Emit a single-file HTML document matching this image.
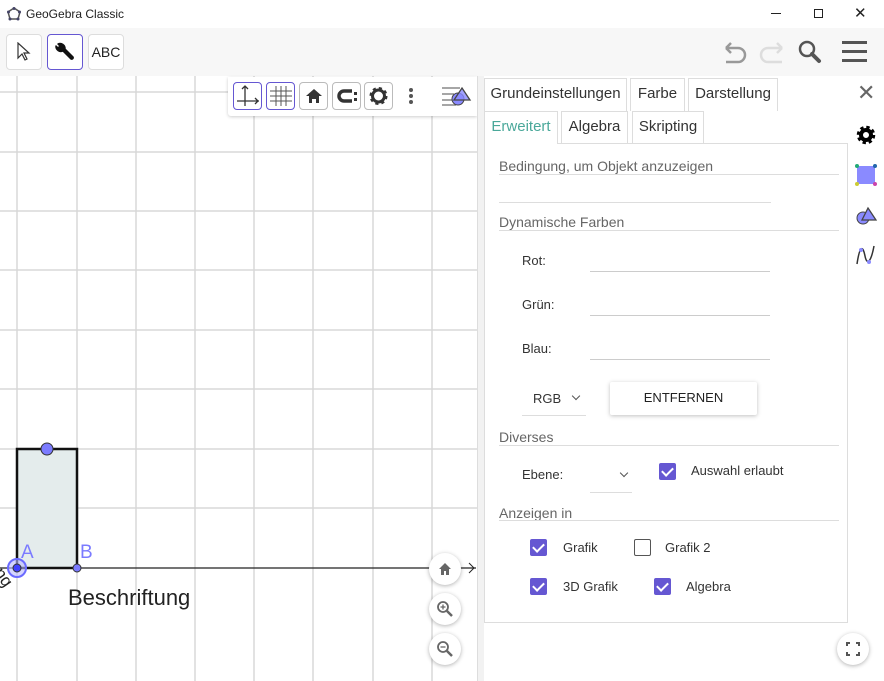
<!DOCTYPE html>
<html><head><meta charset="utf-8"><style>
*{box-sizing:border-box;margin:0;padding:0}
body{width:884px;height:681px;overflow:hidden;font-family:"Liberation Sans",sans-serif;background:#fff;position:relative;color:#333}
.a{position:absolute}
.tab{position:absolute;border:1px solid #ddd;border-bottom:none;background:#fff;font-size:15px;color:#333;padding:6px 0 0 0;text-align:center;height:33px}
.lbl{position:absolute;font-size:14px;color:#666}
.hr{position:absolute;height:1px;background:#ddd}
.t{position:absolute;font-size:13px;color:#333}
.cb{position:absolute;width:17px;height:17px;background:#6557d2;border-radius:2px}
.cb:after{content:"";position:absolute;left:5px;top:2px;width:5px;height:9px;border:solid #fff;border-width:0 2px 2px 0;transform:rotate(45deg)}
.circ{position:absolute;width:32px;height:32px;border-radius:50%;background:#fff;box-shadow:0 1px 4px rgba(0,0,0,.3)}
.tb{position:absolute;top:82px;width:29px;height:28px;border:1px solid #bbb;border-radius:4px;background:#fff}
</style></head><body>
<div class="a" style="left:0;top:0;width:884px;height:28px;background:#fff"></div>
<svg class="a" style="left:7px;top:7px" width="14" height="14"><polygon points="7,1 13,5 11,12 3,12 1,5" fill="none" stroke="#555" stroke-width="1.5"/><circle cx="7" cy="1.5" r="1.5" fill="#446"/><circle cx="12.5" cy="5" r="1.5" fill="#446"/><circle cx="1.5" cy="5" r="1.5" fill="#446"/><circle cx="11" cy="12" r="1.5" fill="#446"/><circle cx="3" cy="12" r="1.5" fill="#446"/></svg>
<div class="a" style="left:26px;top:7px;font-size:12px;color:#222">GeoGebra Classic</div>
<div class="a" style="left:771px;top:13px;width:10px;height:1px;background:#222"></div>
<div class="a" style="left:814px;top:9px;width:9px;height:9px;border:1px solid #222"></div>
<div class="a" style="left:854px;top:4px;font-size:15px;color:#222">✕</div>
<div class="a" style="left:0;top:28px;width:884px;height:48px;background:#f7f7f7"></div>
<div class="a" style="left:6px;top:34px;width:36px;height:36px;background:#fff;border:1px solid #ddd;border-radius:4px"></div>
<svg class="a" style="left:16px;top:42px" width="16" height="20"><path d="M2 1 L2 16 L6 12 L9 18 L11 17 L8 11 L13 11 Z" fill="#fff" stroke="#333" stroke-width="1.2"/></svg>
<div class="a" style="left:47px;top:34px;width:36px;height:36px;background:#fff;border:1.5px solid #6557d2;border-radius:4px"></div>
<svg class="a" style="left:54px;top:41px" width="22" height="22"><path d="M4 3 L6 5 L4 7 L2 5 A5 5 0 0 0 9 10 L17 18 A1.5 1.5 0 0 0 19 16 L11 8 A5 5 0 0 0 4 3 Z" fill="#111" stroke="#111" stroke-width="1.5" stroke-linejoin="round"/></svg>
<div class="a" style="left:88px;top:34px;width:36px;height:36px;background:#fff;border:1px solid #ddd;border-radius:4px;font-size:14px;text-align:center;line-height:34px;color:#222">ABC</div>
<svg class="a" style="left:720px;top:38px" width="120" height="30"><path d="M6 10 H18 a7 7 0 0 1 0 14 H6 M6 10 l5-5 M6 10 l5 5" stroke="#999" stroke-width="2.5" fill="none"/><path d="M62 10 H48 a7 7 0 0 0 0 14 H62 M62 10 l-5-5 M62 10 l-5 5" stroke="#ddd" stroke-width="2.5" fill="none"/><circle cx="87" cy="11" r="7" stroke="#555" stroke-width="2.5" fill="none"/><path d="M92 16 l7 7" stroke="#555" stroke-width="4" stroke-linecap="round"/></svg>
<div class="a" style="left:842px;top:41px;width:25px;height:3px;background:#555;box-shadow:0 9px 0 #555,0 18px 0 #555"></div>
<svg class="a" style="left:0;top:76px" width="478" height="605">
<g stroke="#d8d8d8" stroke-width="1.5">
<line x1="17" y1="0" x2="17" y2="605"/><line x1="77" y1="0" x2="77" y2="605"/><line x1="136" y1="0" x2="136" y2="605"/><line x1="195" y1="0" x2="195" y2="605"/><line x1="254" y1="0" x2="254" y2="605"/><line x1="313" y1="0" x2="313" y2="605"/><line x1="373" y1="0" x2="373" y2="605"/><line x1="432" y1="0" x2="432" y2="605"/>
<line x1="0" y1="16" x2="478" y2="16"/><line x1="0" y1="76" x2="478" y2="76"/><line x1="0" y1="135" x2="478" y2="135"/><line x1="0" y1="194" x2="478" y2="194"/><line x1="0" y1="254" x2="478" y2="254"/><line x1="0" y1="313" x2="478" y2="313"/><line x1="0" y1="373" x2="478" y2="373"/><line x1="0" y1="432" x2="478" y2="432"/>
</g>
<line x1="0" y1="492" x2="476" y2="492" stroke="#222" stroke-width="1.2"/>
<path d="M469 487 l5 5 l-5 5" stroke="#222" fill="none"/>
<rect x="17" y="373" width="60" height="119" fill="#e4ecec" stroke="#111" stroke-width="2.5"/>
<circle cx="47" cy="373" r="6" fill="#7b7bff" stroke="#333"/>
<circle cx="77" cy="492" r="4" fill="#7b7bff" stroke="#333"/>
<circle cx="17" cy="492" r="9" fill="#b9b9ff" fill-opacity=".6" stroke="#6a6aff" stroke-width="2"/>
<circle cx="17" cy="492" r="4" fill="#4040ff" stroke="#333"/>
<text x="21" y="482" font-size="19" fill="#7b7bff" font-family="Liberation Sans">A</text>
<text x="80" y="482" font-size="19" fill="#7b7bff" font-family="Liberation Sans">B</text>
<text x="-8" y="500" font-size="17" fill="#222" font-family="Liberation Sans" transform="rotate(55 -4 500)">ng</text>
<text x="68" y="529" font-size="22" fill="#222" font-family="Liberation Sans">Beschriftung</text>
</svg>
<div class="a" style="left:228px;top:77px;width:249px;height:39px;background:#fff;box-shadow:0 1px 3px rgba(0,0,0,.2);border-radius:0 0 0 3px"></div>
<div class="tb" style="left:233px;border-color:#6557d2"><svg width="27" height="26"><path d="M11 3 V23 M3 18 H25 M21 15 l3 3 l-3 3 M8 6 l3-3 l3 3" stroke="#333" stroke-width="1.3" fill="none"/></svg></div>
<div class="tb" style="left:266px;border-color:#6557d2"><svg width="27" height="26"><path d="M9 3V23M14 3V23M19 3V23M3 8H25M3 13H25M3 18H25" stroke="#555" stroke-width="1"/></svg></div>
<div class="tb" style="left:299px"><svg width="27" height="26"><path d="M6 13 L14 6 L22 13 H19 V20 H16 V16 H12 V20 H9 V13 Z" fill="#333"/></svg></div>
<div class="tb" style="left:332px"><svg width="27" height="26"><path d="M19 8 H11 a5 5 0 0 0 0 10 H19" stroke="#333" stroke-width="3.5" fill="none"/><rect x="21" y="9" width="3" height="3" fill="#333"/><rect x="21" y="15" width="3" height="3" fill="#333"/></svg></div>
<div class="tb" style="left:364px"><svg width="27" height="26"><circle cx="13.5" cy="13" r="6" fill="none" stroke="#333" stroke-width="3"/><circle cx="13.5" cy="13" r="7.5" fill="none" stroke="#333" stroke-width="3" stroke-dasharray="3 2.9"/></svg></div>
<div class="a" style="left:409px;top:88px;width:4px;height:4px;border-radius:2px;background:#555;box-shadow:0 6px 0 #555,0 12px 0 #555"></div>
<svg class="a" style="left:440px;top:84px" width="32" height="24"><path d="M2 4H20M2 10H14M2 16H12M2 21H16" stroke="#888" stroke-width="1.5"/><circle cx="18" cy="15" r="6" fill="#8a8aff" stroke="#444"/><path d="M22 4 L30 16 H14 Z" fill="#8a8aff" stroke="#444" stroke-width="1.3" fill-opacity=".8"/></svg>
<div class="circ" style="left:429px;top:553px"><svg width="32" height="32"><path d="M10 16 L16 10 L22 16 H20 V22 H17 V18 H15 V22 H12 V16 Z" fill="#666"/></svg></div>
<div class="circ" style="left:429px;top:593px"><svg width="32" height="32"><circle cx="14" cy="14" r="5" fill="none" stroke="#666" stroke-width="1.8"/><path d="M18 18 l5 5" stroke="#666" stroke-width="2.5"/><path d="M14 11.5v5M11.5 14h5" stroke="#666" stroke-width="1.3"/></svg></div>
<div class="circ" style="left:429px;top:633px"><svg width="32" height="32"><circle cx="14" cy="14" r="5" fill="none" stroke="#666" stroke-width="1.8"/><path d="M18 18 l5 5" stroke="#666" stroke-width="2.5"/><path d="M11.5 14h5" stroke="#666" stroke-width="1.3"/></svg></div>
<div class="a" style="left:477px;top:76px;width:7px;height:605px;background:#f2f2f2;border-left:1px solid #ddd"></div>
<div class="tab" style="left:484px;top:78px;width:143px">Grundeinstellungen</div>
<div class="tab" style="left:630px;top:78px;width:55px">Farbe</div>
<div class="tab" style="left:688px;top:78px;width:90px">Darstellung</div>
<div class="tab" style="left:484px;top:111px;width:74px;color:#4aa89a;height:33px;z-index:2">Erweitert</div>
<div class="tab" style="left:561px;top:111px;width:67px">Algebra</div>
<div class="tab" style="left:632px;top:111px;width:72px">Skripting</div>
<div class="a" style="left:484px;top:143px;width:364px;height:480px;border:1px solid #ddd"></div>
<div class="a" style="left:857px;top:80px;font-size:22px;color:#666">✕</div>
<svg class="a" style="left:855px;top:124px" width="22" height="22"><circle cx="11" cy="11" r="5" fill="none" stroke="#000" stroke-width="4"/><circle cx="11" cy="11" r="7.5" fill="none" stroke="#000" stroke-width="3.5" stroke-dasharray="3.2 2.7"/></svg>
<svg class="a" style="left:855px;top:164px" width="22" height="22"><rect x="2" y="2" width="18" height="18" fill="#8a8aff"/><circle cx="2" cy="2" r="2" fill="#2a7"/><circle cx="20" cy="2" r="2" fill="#26a"/><circle cx="2" cy="20" r="2" fill="#cc3"/><circle cx="20" cy="20" r="2" fill="#c4a"/></svg>
<svg class="a" style="left:855px;top:204px" width="22" height="22"><circle cx="8" cy="14" r="6" fill="#8a8aff" stroke="#444"/><path d="M13 4 L21 16 H7 Z" fill="#8a8aff" stroke="#444" stroke-width="1.3"/></svg>
<svg class="a" style="left:855px;top:244px" width="22" height="22"><path d="M2 20 C5 0 8 2 10 12 C12 22 16 18 19 2" fill="none" stroke="#333" stroke-width="1.5"/><circle cx="6" cy="6" r="2" fill="#8a8aff"/><circle cx="14" cy="18" r="2" fill="#8a8aff"/></svg>
<div class="lbl" style="left:499px;top:158px">Bedingung, um Objekt anzuzeigen</div>
<div class="hr" style="left:499px;top:174px;width:340px"></div>
<div class="hr" style="left:499px;top:202px;width:272px"></div>
<div class="lbl" style="left:499px;top:214px">Dynamische Farben</div>
<div class="hr" style="left:499px;top:230px;width:340px"></div>
<div class="t" style="left:522px;top:253px">Rot:</div>
<div class="hr" style="left:590px;top:271px;width:180px;background:#ccc"></div>
<div class="t" style="left:522px;top:297px">Grün:</div>
<div class="hr" style="left:590px;top:315px;width:180px;background:#ccc"></div>
<div class="t" style="left:522px;top:341px">Blau:</div>
<div class="hr" style="left:590px;top:359px;width:180px;background:#ccc"></div>
<div class="t" style="left:533px;top:391px">RGB</div>
<div class="a" style="left:573px;top:393px;width:6px;height:6px;border:solid #555;border-width:0 1.3px 1.3px 0;transform:rotate(45deg)"></div>
<div class="hr" style="left:522px;top:415px;width:64px"></div>
<div class="a" style="left:610px;top:382px;width:147px;height:33px;background:#fff;box-shadow:0 1px 4px rgba(0,0,0,.25);border-radius:2px;font-size:13px;color:#222;text-align:center;line-height:32px">ENTFERNEN</div>
<div class="lbl" style="left:499px;top:429px">Diverses</div>
<div class="hr" style="left:499px;top:445px;width:340px"></div>
<div class="t" style="left:522px;top:467px">Ebene:</div>
<div class="a" style="left:621px;top:470px;width:6px;height:6px;border:solid #555;border-width:0 1.3px 1.3px 0;transform:rotate(45deg)"></div>
<div class="hr" style="left:590px;top:492px;width:42px"></div>
<div class="cb" style="left:659px;top:463px"></div>
<div class="t" style="left:691px;top:463px">Auswahl erlaubt</div>
<div class="lbl" style="left:499px;top:505px">Anzeigen in</div>
<div class="hr" style="left:499px;top:520px;width:340px"></div>
<div class="cb" style="left:530px;top:539px"></div>
<div class="t" style="left:563px;top:540px">Grafik</div>
<div class="a" style="left:634px;top:539px;width:17px;height:17px;border:1.5px solid #555;border-radius:2px"></div>
<div class="t" style="left:665px;top:540px">Grafik 2</div>
<div class="cb" style="left:530px;top:578px"></div>
<div class="t" style="left:563px;top:579px">3D Grafik</div>
<div class="cb" style="left:654px;top:578px"></div>
<div class="t" style="left:686px;top:579px">Algebra</div>
<div class="circ" style="left:837px;top:633px"><svg width="32" height="32"><path d="M10 13V10H13M19 10H22V13M22 19V22H19M13 22H10V19" stroke="#555" stroke-width="2" fill="none"/></svg></div>
</body></html>
